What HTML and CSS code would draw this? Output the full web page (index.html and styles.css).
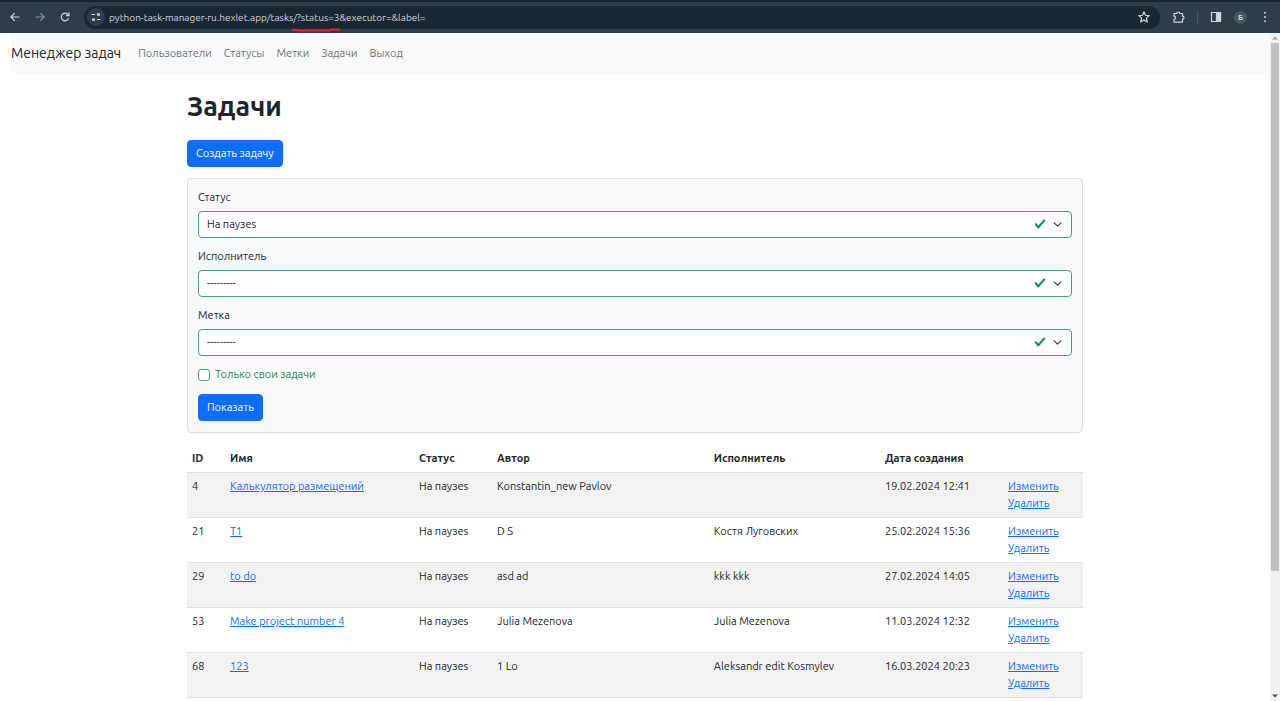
FILE: index.html
```html
<!DOCTYPE html>
<html lang="ru">
<head>
<meta charset="utf-8">
<title>Менеджер задач</title>
<link rel="stylesheet" href="styles.css">
</head>
<body>
<header class="toolbar">
  <button class="tool" aria-label="Back"><svg viewBox="0 0 12 12"><path d="M10.5 6H2M5.7 2.2 1.9 6l3.8 3.8"/></svg></button>
  <button class="tool dim" aria-label="Forward"><svg viewBox="0 0 12 12"><path d="M1.5 6H10M6.3 2.2 10.100 6l-3.800 3.800"/></svg></button>
  <button class="tool" aria-label="Reload"><svg viewBox="0 0 12 12"><path d="M9.600 7.300A3.800 3.800 0 1 1 8.700 3.300L9.800 4.400M10 1.500v3.100H6.900"/></svg></button>
  <div class="address">
    <button class="site" aria-label="Site information"><svg viewBox="0 0 12 12"><path d="M1.500 3.500H5M7 8.500h3.500"/><circle cx="8.500" cy="3.500" r="1"/><circle cx="3.500" cy="8.500" r="1"/></svg></button>
    <input class="url" type="text" aria-label="Address" value="python-task-manager-ru.hexlet.app/tasks/?status=3&amp;executor=&amp;label=">
    <svg class="mark" viewBox="0 0 48 4"><path d="M1 1.500C5 3 12 2.500 20 2.500h17L39 1.500h8"/></svg>
    <button class="tool" aria-label="Bookmark"><svg viewBox="0 0 12 12"><path d="m6 1 1.500 3.300 3.600.4-2.700 2.400.8 3.600L6 8.900l-3.200 1.800.8-3.600L.9 4.700l3.600-.4z"/></svg></button>
  </div>
  <div class="actions">
    <button class="tool" aria-label="Extensions"><svg viewBox="0 0 12 12"><path d="M1 2.500h2.800a1.500 1.500 0 0 1 3 0h2.700v2.700a1.500 1.500 0 0 1 0 3v2.900H1V8.400a1.600 1.600 0 0 0 0-3.200z"/></svg></button>
    <span class="divider"></span>
    <button class="tool" aria-label="Side panel"><svg viewBox="0 0 12 12"><path d="M1.500 1.500h9v9h-9z"/><path class="solid" d="M6.500 1.500h4v9h-4z"/></svg></button>
    <button class="avatar" aria-label="Profile">Б</button>
    <button class="tool" aria-label="Menu"><svg viewBox="0 0 12 12"><g class="solid"><circle cx="6" cy="1.800" r=".4"/><circle cx="6" cy="6" r=".4"/><circle cx="6" cy="10.200" r=".4"/></g></svg></button>
  </div>
</header>
<div class="viewport">
  <div class="page">
    <nav class="navbar">
      <a class="brand" href="#">Менеджер задач</a>
      <a href="#">Пользователи</a>
      <a href="#">Статусы</a>
      <a href="#">Метки</a>
      <a href="#">Задачи</a>
      <a href="#">Выход</a>
    </nav>
    <main class="container">
      <h1>Задачи</h1>
      <a class="btn" href="#">Создать задачу</a>
      <form class="card">
        <div class="field">
          <label for="status">Статус</label>
          <div class="control">
            <select id="status"><option>На паузеs</option></select>
            <svg class="valid" viewBox="0 0 8 8"><path d="M2.300 6.730.6 4.530c-.4-1.040.46-1.400 1.100-.8l1.100 1.400 3.400-3.800c.6-.63 1.600-.27 1.200.7l-4 4.600c-.43.5-.8.4-1.100.1z"/></svg>
            <svg class="caret" viewBox="0 0 16 16"><path d="m2 5 6 6 6-6"/></svg>
          </div>
        </div>
        <div class="field">
          <label for="executor">Исполнитель</label>
          <div class="control">
            <select id="executor"><option>---------</option></select>
            <svg class="valid" viewBox="0 0 8 8"><path d="M2.300 6.730.6 4.530c-.4-1.040.46-1.400 1.100-.8l1.100 1.400 3.400-3.800c.6-.63 1.600-.27 1.200.7l-4 4.600c-.43.5-.8.4-1.100.1z"/></svg>
            <svg class="caret" viewBox="0 0 16 16"><path d="m2 5 6 6 6-6"/></svg>
          </div>
        </div>
        <div class="field">
          <label for="label">Метка</label>
          <div class="control">
            <select id="label"><option>---------</option></select>
            <svg class="valid" viewBox="0 0 8 8"><path d="M2.300 6.730.6 4.530c-.4-1.040.46-1.400 1.100-.8l1.100 1.400 3.400-3.800c.6-.63 1.600-.27 1.200.7l-4 4.600c-.43.5-.8.4-1.100.1z"/></svg>
            <svg class="caret" viewBox="0 0 16 16"><path d="m2 5 6 6 6-6"/></svg>
          </div>
        </div>
        <div class="check">
          <input type="checkbox" id="own">
          <label for="own">Только свои задачи</label>
        </div>
        <button class="btn" type="button">Показать</button>
      </form>
      <table class="tasks">
        <thead>
          <tr><th class="c-id">ID</th><th class="c-name">Имя</th><th class="c-status">Статус</th><th class="c-author">Автор</th><th class="c-executor">Исполнитель</th><th class="c-date">Дата создания</th><th></th></tr>
        </thead>
        <tbody>
          <tr><td>4</td><td><a href="#">Калькулятор размещений</a></td><td>На паузеs</td><td>Konstantin_new Pavlov</td><td></td><td>19.02.2024 12:41</td><td><a href="#">Изменить</a><br><a href="#">Удалить</a></td></tr>
          <tr><td>21</td><td><a href="#">T1</a></td><td>На паузеs</td><td>D S</td><td>Костя Луговских</td><td>25.02.2024 15:36</td><td><a href="#">Изменить</a><br><a href="#">Удалить</a></td></tr>
          <tr><td>29</td><td><a href="#">to do</a></td><td>На паузеs</td><td>asd ad</td><td>kkk kkk</td><td>27.02.2024 14:05</td><td><a href="#">Изменить</a><br><a href="#">Удалить</a></td></tr>
          <tr><td>53</td><td><a href="#">Make project number 4</a></td><td>На паузеs</td><td>Julia Mezenova</td><td>Julia Mezenova</td><td>11.03.2024 12:32</td><td><a href="#">Изменить</a><br><a href="#">Удалить</a></td></tr>
          <tr><td>68</td><td><a href="#">123</a></td><td>На паузеs</td><td>1 Lo</td><td>Aleksandr edit Kosmylev</td><td>16.03.2024 20:23</td><td><a href="#">Изменить</a><br><a href="#">Удалить</a></td></tr>
        </tbody>
      </table>
    </main>
  </div>
  <div class="scrollbar">
    <svg viewBox="0 0 10 10"><path class="faint" d="M2 6.500 5 3.500l3 3z"/></svg>
    <div class="track"><div class="thumb"></div></div>
    <svg viewBox="0 0 10 10"><path d="M2 3.500h6l-3 3z"/></svg>
  </div>
</div>
</body>
</html>
```
FILE: styles.css
```css
* { box-sizing: border-box; }

body {
  margin: 0;
  height: 100vh;
  display: flex;
  flex-direction: column;
  overflow: hidden;
  background: #fff;
  color: #212529;
  font: 11px/17px Ubuntu, "Noto Sans", sans-serif;
}

button, input, select { font: inherit; color: inherit; margin: 0; }

/* Browser toolbar */
.toolbar {
  flex: none;
  display: flex;
  align-items: center;
  gap: 13px;
  height: 33px;
  padding: 0 9px 1px;
  border-top: 2px solid #142430;
  background: #2f3c4b;
  color: #cfd5dc;
}
.actions { display: flex; align-items: center; gap: 12px; }
.tool {
  flex: none;
  width: 12px;
  height: 12px;
  padding: 0;
  border: 0;
  background: none;
}
.tool svg, .site svg {
  display: block;
  width: 12px;
  height: 12px;
  fill: none;
  stroke: currentColor;
  stroke-width: 1.2;
}
.tool .solid { fill: currentColor; }
.dim { color: #84909c; }
.address {
  position: relative;
  flex: 1;
  display: flex;
  align-items: center;
  gap: 4px;
  height: 23px;
  padding: 0 10px 0 3px;
  border-radius: 12px;
  background: #192733;
}
.site {
  flex: none;
  display: grid;
  place-items: center;
  width: 18px;
  height: 18px;
  padding: 0;
  border: 0;
  border-radius: 50%;
  background: #2f3c4b;
}
.url {
  flex: 1;
  min-width: 0;
  padding: 0;
  border: 0;
  outline: 0;
  background: none;
  font-size: 10px;
}
.mark {
  position: absolute;
  left: 208px;
  top: 22px;
  width: 48px;
  height: 4px;
  fill: none;
  stroke: #ee1c2e;
  stroke-width: 2;
  stroke-linecap: round;
}
.divider { width: 1px; height: 12px; background: #4c5966; }
.avatar {
  flex: none;
  width: 13px;
  height: 13px;
  padding: 0;
  border: 0;
  border-radius: 50%;
  background: #455a60;
  font-size: 8px;
  font-weight: 700;
  line-height: 13px;
}

/* Page area with its scrollbar */
.viewport { flex: 1; min-height: 0; display: flex; }
.page { flex: 1; min-width: 0; overflow: hidden; }
.scrollbar {
  flex: none;
  width: 10px;
  display: flex;
  flex-direction: column;
  background: #f1f1f1;
}
.scrollbar svg { flex: none; width: 10px; height: 10px; fill: #505050; }
.scrollbar .faint { fill: #a3a3a3; }
.track { flex: 1; display: flex; flex-direction: column; padding: 0 1px; }
.thumb { flex: 22; background: #c1c1c1; }
.track::after { content: ""; flex: 5; }

.navbar {
  display: flex;
  align-items: center;
  gap: 12px;
  height: 40px;
  margin-left: 11px;
  background: #f8f9fa;
}
.navbar a { color: #717273; text-decoration: none; }
.navbar .brand { margin-right: 5px; color: #212529; font-size: 14px; }

.container { max-width: 896px; margin: 0 auto; }
h1 {
  margin: 16px 0 17px;
  font-size: 27px;
  line-height: 34px;
  font-weight: 600;
}
.btn {
  display: inline-block;
  padding: 4px 8px;
  border: 1px solid #0d6efd;
  border-radius: 4px;
  background: #0d6efd;
  color: #fff;
  line-height: 17px;
  text-decoration: none;
  vertical-align: top;
}

.card {
  margin: 11px 0 12px;
  padding: 10px 10px 11px;
  border: 1px solid #dcdfe2;
  border-radius: 4px;
  background: #f8f9fa;
}
.field { margin-bottom: 10px; }
.field label { display: block; margin-bottom: 5px; }
.control { position: relative; }
.control select {
  display: block;
  width: 100%;
  height: 27px;
  padding: 0 50px 0 8px;
  appearance: none;
  border: 1px solid #48a078;
  border-radius: 4px;
  background: #fff;
}
.valid, .caret { position: absolute; top: 7px; pointer-events: none; }
.valid { right: 26px; width: 12px; height: 12px; fill: #198754; }
.caret {
  right: 10px;
  top: 9px;
  width: 9px;
  height: 9px;
  fill: none;
  stroke: #343a40;
  stroke-width: 2;
  stroke-linecap: round;
  stroke-linejoin: round;
}
.check {
  display: flex;
  align-items: center;
  gap: 5px;
  margin-bottom: 11px;
  color: #198754;
}
.check input {
  width: 12px;
  height: 12px;
  appearance: none;
  border: 1px solid #48a078;
  border-radius: 3px;
  background: #fff;
}

.tasks {
  width: 100%;
  table-layout: fixed;
  border-collapse: collapse;
}
.tasks th, .tasks td {
  padding: 5px;
  border-bottom: 1px solid #dee2e6;
  text-align: left;
  vertical-align: top;
}
.tasks tbody tr:nth-child(odd) { background: #f2f2f2; }
.tasks a { color: #0d6efd; }
.c-id { width: 4.24%; }
.c-name { width: 21.1%; }
.c-status { width: 8.7%; }
.c-author { width: 24.2%; }
.c-executor { width: 19.1%; }
.c-date { width: 13.75%; }
```
